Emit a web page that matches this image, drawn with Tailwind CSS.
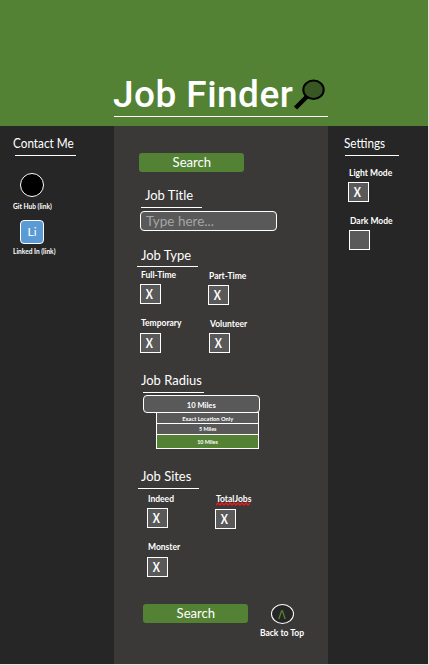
<!DOCTYPE html>
<html lang="en">
<head>
<meta charset="utf-8">
<title>Job Finder</title>
<script src="https://cdn.jsdelivr.net/npm/@tailwindcss/browser@4"></script>
</head>
<body class="bg-[#e4e4e4] font-['Lato','Liberation_Sans',sans-serif] text-white">
<div class="flex h-[664px] w-[428px] flex-col overflow-hidden whitespace-nowrap">
  <header class="h-[126px] shrink-0 bg-[#548235] pt-[74px] pl-[114px]">
    <div class="flex h-[43px] w-[214px] border-b border-white">
      <h1 class="-ml-px h-[42px] w-[180px] shrink-0 font-['Roboto',sans-serif] text-[37px] leading-[42px] font-medium tracking-[.45px]">Job Finder</h1>
      <svg class="mt-[5px] h-[33px] w-[33px] shrink-0" viewBox="0 0 33 33" fill="none"><path d="M14 17.5 2.5 29" stroke="#000" stroke-width="4.5"/><ellipse cx="20.5" cy="10.8" rx="10.2" ry="9.2" fill="#385723" stroke="#000" stroke-width="2"/></svg>
    </div>
  </header>
  <div class="flex grow">
    <aside class="flex w-[114px] flex-col items-start bg-[#262626] pt-[10px] pl-[13px]">
      <h2 class="h-4 text-[12.5px] leading-4"><span class="inline-block origin-left scale-x-[.94]">Contact Me</span></h2>
      <div class="mt-[3px] ml-[2px] h-px w-[61px] bg-white"></div>
      <a class="mt-[17px] ml-[7px] size-6 rounded-full border border-white bg-black"></a>
      <p class="mt-[5px] h-2 text-[6.6px] leading-2 font-bold"><span class="inline-block origin-left">Git Hub (link)</span></p>
      <a class="mt-[10px] ml-[7px] flex size-6 items-center justify-center rounded-[4px] border border-white bg-[#5b9bd5] text-[12px]">Li</a>
      <p class="mt-[3px] h-2 text-[6.6px] leading-2 font-bold"><span class="inline-block origin-left">Linked In (link)</span></p>
    </aside>

    <main class="flex w-[214px] flex-col items-start bg-[#3b3937] pt-[27px] pl-[23px]">
      <button class="ml-[2px] h-[19px] w-[105px] rounded-[3px] bg-[#548235] text-[13.5px] leading-[19px]"><span class="inline-block scale-x-[.97]">Search</span></button>
      <h2 class="mt-[15px] ml-[8px] h-4 text-[13.5px] leading-4"><span class="inline-block origin-left scale-x-[.96]">Job Title</span></h2>
      <div class="mt-[4px] ml-[4px] h-px w-[61px] bg-white"></div>
      <div class="mt-[3px] ml-[3px] h-5 w-[137px] rounded-[4px] border border-white bg-[#595959] pl-[5px] text-[13.5px] leading-[18px] text-[#a6a6a6]"><span class="inline-block origin-left">Type here...</span></div>

      <h2 class="mt-[16px] ml-[4px] h-4 text-[13.5px] leading-4"><span class="inline-block origin-left scale-x-[.96]">Job Type</span></h2>
      <div class="mt-[3px] h-px w-[61px] bg-white"></div>
      <div class="mt-[3px] ml-[3px] flex h-[83px] text-[8.5px] leading-[10px] font-bold">
        <div class="w-[68px]">
          <p class="ml-px h-[10px]">Full-Time</p>
          <div class="mt-[4px] h-5 w-[21px] border border-white bg-[#595959] pr-[2px] text-center text-[13px] leading-[18px]"><span class="inline-block scale-x-[.82]">X</span></div>
          <p class="mt-[14px] ml-px h-[10px]">Temporary</p>
          <div class="mt-[5px] h-5 w-[21px] border border-white bg-[#595959] pr-[2px] text-center text-[13px] leading-[18px]"><span class="inline-block scale-x-[.82]">X</span></div>
        </div>
        <div class="pt-px">
          <p class="ml-px h-[10px]">Part-Time</p>
          <div class="mt-[4px] h-5 w-[21px] border border-white bg-[#595959] pr-[2px] text-center text-[13px] leading-[18px]"><span class="inline-block scale-x-[.82]">X</span></div>
          <p class="mt-[14px] ml-[2px] h-[10px]">Volunteer</p>
          <div class="mt-[4px] ml-px h-5 w-[21px] border border-white bg-[#595959] pr-[2px] text-center text-[13px] leading-[18px]"><span class="inline-block scale-x-[.82]">X</span></div>
        </div>
      </div>

      <h2 class="mt-[19px] ml-[4px] h-4 text-[13.5px] leading-4"><span class="inline-block origin-left scale-x-[.96]">Job Radius</span></h2>
      <div class="mt-[4px] ml-[6px] h-px w-[61px] bg-white"></div>
      <div class="mt-[2px] ml-[6px] h-[18px] w-[117px] rounded-[4px] border border-white bg-[#595959] text-center text-[8px] leading-[18px] font-bold"><span class="inline-block scale-x-[.95]">10 Miles</span></div>
      <div class="-mt-px ml-[19px] w-[103px] divide-y divide-white border border-white bg-[#595959] text-center text-[6px] font-bold">
        <div class="h-[11px] leading-[11px]"><span class="inline-block scale-x-[.95]">Exact Location Only</span></div>
        <div class="h-[11px] leading-[9px]"><span class="inline-block scale-x-[.9]">5 Miles</span></div>
        <div class="h-[13px] bg-[#548235] leading-[13px]"><span class="inline-block scale-x-[.9]">10 Miles</span></div>
      </div>

      <h2 class="mt-[19px] ml-[4px] h-4 text-[13.5px] leading-4"><span class="inline-block origin-left scale-x-[.96]">Job Sites</span></h2>
      <div class="mt-[4px] ml-px h-px w-[61px] bg-white"></div>
      <div class="mt-[5px] ml-[10px] flex h-[83px] text-[8.5px] leading-[10px] font-bold">
        <div class="w-[68px]">
          <p class="ml-px h-[10px]">Indeed</p>
          <div class="mt-[4px] h-5 w-[21px] border border-white bg-[#595959] pr-[2px] text-center text-[13px] leading-[18px]"><span class="inline-block scale-x-[.82]">X</span></div>
          <p class="mt-[14px] ml-px h-[10px]">Monster</p>
          <div class="mt-[5px] h-5 w-[21px] border border-white bg-[#595959] pr-[2px] text-center text-[13px] leading-[18px]"><span class="inline-block scale-x-[.82]">X</span></div>
        </div>
        <div>
          <p class="relative ml-px h-[10px]">TotalJobs<svg class="absolute top-[8px] left-0 h-[4px] w-[36px]" viewBox="0 0 36 4" fill="none" stroke="#f01818" stroke-width="1.3"><path d="M0 3l2-2 2 2 2-2 2 2 2-2 2 2 2-2 2 2 2-2 2 2 2-2 2 2 2-2 2 2 2-2 2 2 2-2"/></svg></p>
          <div class="mt-[5px] h-5 w-[21px] border border-white bg-[#595959] pr-[2px] text-center text-[13px] leading-[18px]"><span class="inline-block scale-x-[.82]">X</span></div>
        </div>
      </div>

      <div class="mt-[27px] ml-[6px] flex">
        <button class="h-[19px] w-[105px] rounded-[3px] bg-[#548235] text-[13.5px] leading-[19px]"><span class="inline-block scale-x-[.97]">Search</span></button>
        <div class="ml-[11px] flex w-[46px] flex-col items-center">
          <a class="flex h-5 w-[23px] items-center justify-center rounded-[50%] border border-white bg-[#262626]"><svg class="h-[9px] w-[8px]" viewBox="0 0 8 9" fill="none" stroke="#548235" stroke-width="1.3"><path d="M.8 9 3.6.8h.8L7.2 9"/></svg></a>
          <p class="mt-[4px] h-[10px] text-[8.5px] leading-[10px] font-bold">Back to Top</p>
        </div>
      </div>
    </main>

    <aside class="flex w-[100px] flex-col items-start bg-[#262626] pt-[10px] pl-[16px]">
      <h2 class="h-4 text-[12.5px] leading-4"><span class="inline-block origin-left scale-x-[.94]">Settings</span></h2>
      <div class="mt-[3px] ml-px h-px w-[54px] bg-white"></div>
      <p class="mt-[12px] ml-[5px] h-[10px] text-[8.5px] leading-[10px] font-bold">Light Mode</p>
      <div class="mt-[4px] ml-[4px] h-5 w-[21px] border border-white bg-[#595959] pr-[2px] text-center text-[13px] leading-[18px] font-bold"><span class="inline-block scale-x-[.82]">X</span></div>
      <p class="mt-[14px] ml-[6px] h-[10px] text-[8.5px] leading-[10px] font-bold">Dark Mode</p>
      <div class="mt-[4px] ml-[5px] h-5 w-[21px] border border-white bg-[#595959]"></div>
    </aside>
  </div>
</div>
</body>
</html>
